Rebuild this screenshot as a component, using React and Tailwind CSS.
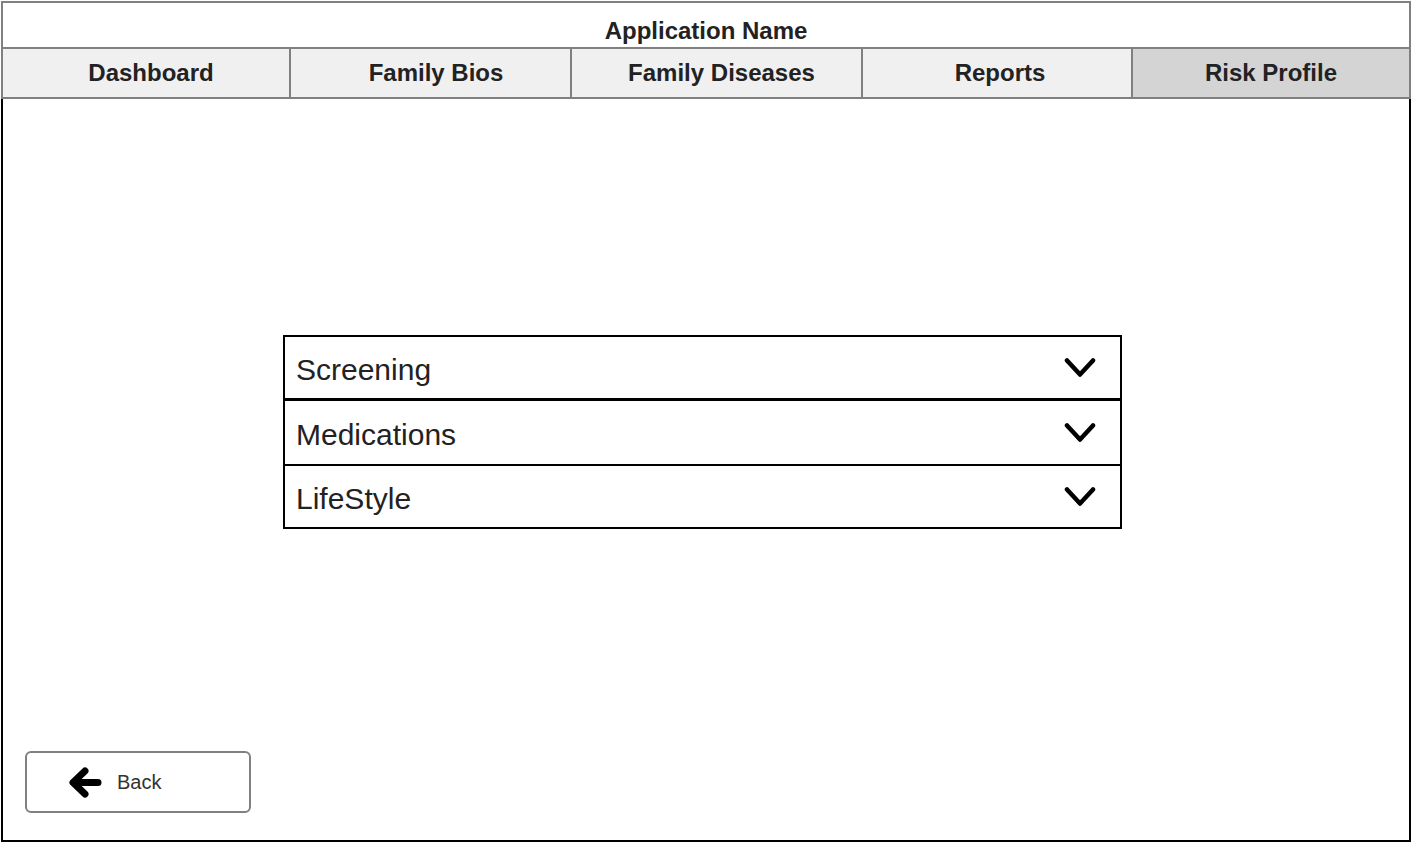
import React from 'react';

const tabs = [
    { label: 'Dashboard', w: 'w-[286px] pl-[10px]' },
    { label: 'Family Bios', w: 'w-[281px] pl-[11px]' },
    { label: 'Family Diseases', w: 'w-[291px] pl-[10px]' },
    { label: 'Reports', w: 'w-[270px] pl-[6px]' },
    { label: 'Risk Profile', w: 'flex-1', active: true },
];

const sections = [
    { label: 'Screening', cls: 'h-[64px] border-b-[3px]' },
    { label: 'Medications', cls: 'h-[65px] border-b-2' },
    { label: 'LifeStyle', cls: 'h-[61px]' },
];

const Chevron = () => (
    <svg width="32" height="22" viewBox="0 0 32 22" fill="none">
        <polyline points="3,3.5 16,17.5 29,3.5" stroke="#000" strokeWidth="4.5" strokeLinecap="round" strokeLinejoin="round" />
    </svg>
);

const BackArrow = () => (
    <svg width="34" height="33" viewBox="0 0 34 33" fill="none">
        <path d="M30 16.5 H7 M17 5 L5 16.5 L17 28" stroke="#000" strokeWidth="7" strokeLinecap="round" strokeLinejoin="round" />
    </svg>
);

const App = () => {
    return (
        <div className="w-[1412px] h-[848px] bg-white font-['Liberation_Sans',Arial,sans-serif]">
            <div className="w-[1410px] ml-[1px] mt-[1px]">
                <div className="border-2 border-[#808080]">
                    <div className="h-[46px] flex items-end justify-center border-b-2 border-[#808080]">
                        <span className="text-[24px] leading-[32px] font-bold text-[#222]">Application Name</span>
                    </div>
                    <div className="flex h-[48px]">
                        {tabs.map((t, i) => (
                            <div
                                key={t.label}
                                className={`${t.w} flex items-center justify-center text-[24px] font-bold text-[#222] ${t.active ? 'bg-[#d4d4d4]' : 'bg-[#f0f0f0]'} ${i > 0 ? 'border-l-2 border-[#808080]' : ''}`}
                            >
                                {t.label}
                            </div>
                        ))}
                    </div>
                </div>

                <div className="h-[743px] border-x-2 border-b-2 border-black flex flex-col">
                    <div className="ml-[280px] mt-[236px] w-[839px] border-2 border-black">
                        {sections.map((s) => (
                            <div key={s.label} className={`${s.cls} border-black flex items-center justify-between pl-[11px] pr-[24px]`}>
                                <span className="text-[30px] text-[#222] pt-[3px]">{s.label}</span>
                                <Chevron />
                            </div>
                        ))}
                    </div>

                    <div className="flex-1" />

                    <button className="ml-[22px] mb-[27px] w-[226px] h-[62px] border-2 border-[#808080] rounded-[6px] flex items-center pl-[41px] gap-[15px] bg-white">
                        <BackArrow />
                        <span className="text-[20px] text-[#333]">Back</span>
                    </button>
                </div>
            </div>
        </div>
    );
};

export default App;
